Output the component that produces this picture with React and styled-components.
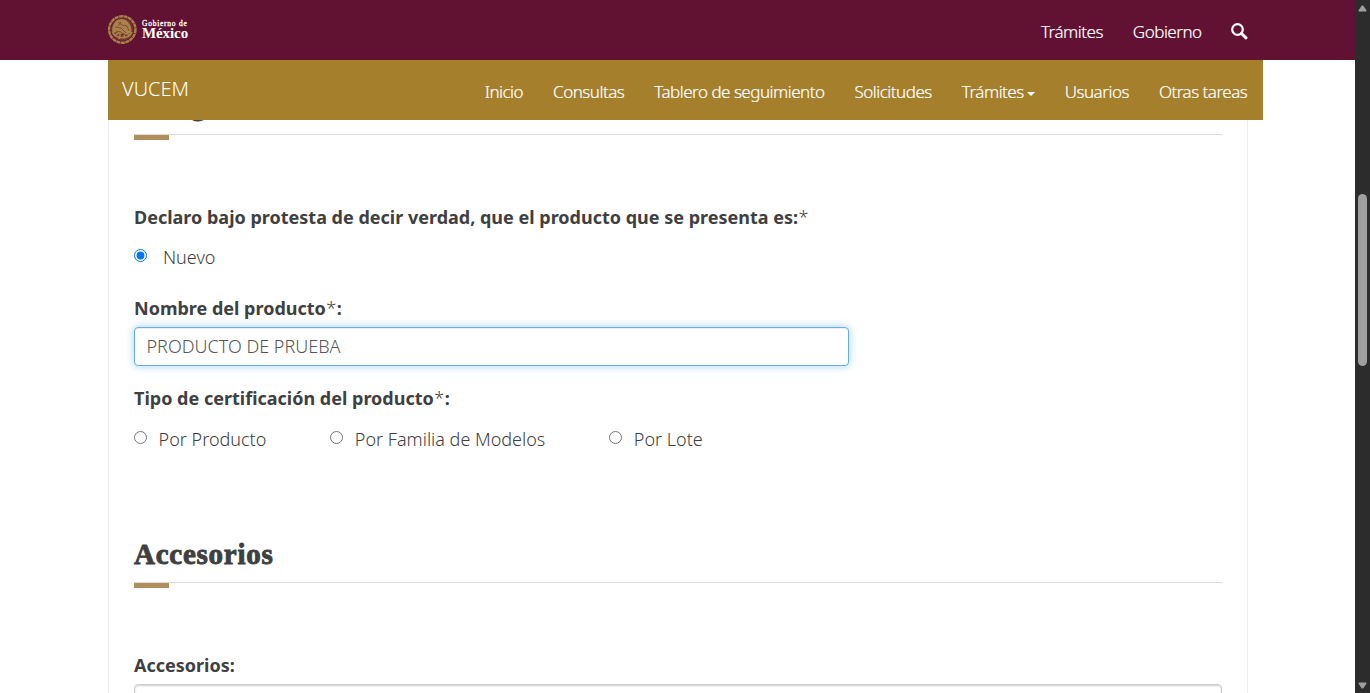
import React from "react";
import styled, { createGlobalStyle } from "styled-components";

const GlobalStyle = createGlobalStyle`
  * { box-sizing: border-box; }
  html, body { margin: 0; padding: 0; overflow: hidden; background: #fff; }
  body {
    font-family: "Noto Sans", "Open Sans", sans-serif;
    font-size: 18px;
    font-weight: 300;
    color: #404041;
  }
`;

const Window = styled.div`
  display: flex;
  width: 1370px;
  height: 693px;
  overflow: hidden;
`;

const Page = styled.div`
  flex: 1;
  display: flex;
  flex-direction: column;
  min-width: 0;
  background: #fff;
`;

const TopBar = styled.header`
  flex: none;
  display: flex;
  justify-content: space-between;
  height: 60px;
  padding: 0 107px 0 107px;
  background: #611232;
`;

const Brand = styled.a`
  display: flex;
  align-items: flex-start;
  gap: 5px;
  padding-top: 14px;
  color: #fff;
`;

const BrandText = styled.span`
  display: flex;
  flex-direction: column;
  padding-top: 6px;
  font-family: "Liberation Serif", serif;
  line-height: 1;
  white-space: nowrap;
`;

const BrandSmall = styled.span`
  font-size: 7.5px;
  font-weight: 400;
  line-height: 7px;
  letter-spacing: 0.75px;
  -webkit-text-stroke: 0.3px #fff;
`;

const BrandLarge = styled.span`
  font-size: 15px;
  font-weight: 700;
  line-height: 12px;
  letter-spacing: -0.1px;
`;

const TopLinks = styled.nav`
  display: flex;
  gap: 30px;
  padding-top: 19px;
`;

const NavLink = styled.a`
  display: flex;
  align-items: center;
  height: 24px;
  font-size: 17px;
  font-weight: 300;
  letter-spacing: -0.5px;
  -webkit-text-stroke: 0.2px #fff;
  color: #fff;
  white-space: nowrap;
`;

const SubBar = styled.div`
  flex: none;
  display: flex;
  justify-content: space-between;
  width: 1155px;
  height: 60px;
  margin-left: 108px;
  padding: 0 15.7px 0 14px;
  background: #a57f2c;
`;

const SubBrand = styled.a`
  padding-top: 15px;
  font-size: 20px;
  line-height: 28px;
  color: #fff;
`;

const SubLinks = styled.nav`
  display: flex;
  gap: 30px;
  padding-top: 19px;
`;

const Caret = styled.span`
  margin: 5px 0 0 3px;
  border: 4px solid transparent;
  border-top-color: #fff;
  border-bottom: 0;
`;

const Panel = styled.main`
  flex: 1;
  min-height: 0;
  width: 1140px;
  margin-left: 108px;
  padding: 0 25px;
  border: solid #eee;
  border-width: 0 1px;
  overflow: hidden;
`;

const SectionTitle = styled.h3`
  display: flex;
  align-items: flex-end;
  height: ${(p) => p.$height}px;
  margin: 0;
  padding: 0 0 ${(p) => p.$bottom || 0}px ${(p) => p.$indent || 0}px;
  border-bottom: 1px solid #ddd;
  font-family: "Liberation Serif", serif;
  font-size: 29px;
  line-height: 32px;
  font-weight: 700;
  letter-spacing: 0.75px;
  -webkit-text-stroke: 0.9px #404041;
`;

const TitleMark = styled.div`
  width: 35px;
  height: 5px;
  background: #b38e5d;
`;

const Field = styled.div`
  margin-top: ${(p) => p.$top}px;
`;

const Label = styled.label`
  display: block;
  height: 24px;
  line-height: 24px;
  font-weight: 700;
  white-space: nowrap;
`;

const Required = styled.span`
  padding: 0 0.5px;
  font-weight: 300;
`;

const Options = styled.div`
  display: flex;
  gap: 63.9px;
  margin-top: ${(p) => p.$top}px;
`;

const Option = styled.label`
  display: flex;
  gap: ${(p) => p.$gap}px;
  height: 24px;
  line-height: 24px;
  white-space: nowrap;
`;

const Radio = styled.input`
  flex: none;
  width: 13px;
  height: 13px;
  margin: 4px 0 0;
`;

const TextInput = styled.input`
  display: block;
  width: 715px;
  height: 39px;
  margin-top: 7px;
  padding: 0 11.5px 2px;
  border: 1px solid #66afe9;
  border-radius: 4px;
  outline: 0;
  box-shadow: inset 0 1px 1px rgba(0, 0, 0, 0.075), 0 0 8px rgba(102, 175, 233, 0.6);
  background: #fff;
  color: #555;
  font: 300 18px "Noto Sans", "Open Sans", sans-serif;
`;

const ListBox = styled.div`
  height: 60px;
  margin-top: 7px;
  border: 1px solid #ccc;
  border-radius: 4px;
  box-shadow: inset 0 1px 2px rgba(0, 0, 0, 0.2);
  background: #fff;
`;

const ScrollTrack = styled.aside`
  flex: none;
  display: flex;
  flex-direction: column;
  justify-content: space-between;
  width: 15px;
  padding: 5px 0 4px 3px;
  background: #2c2c2c;
`;

const ScrollThumb = styled.div`
  width: 9px;
  height: 172px;
  margin-bottom: 135px;
  border-radius: 5px;
  background: #9f9f9f;
`;

function Seal() {
  return (
    <svg width="30" height="31" viewBox="0 0 30 31" fill="none" stroke="#a98149">
      <circle cx="15.3" cy="15.5" r="13.2" strokeWidth="2.4" strokeDasharray="4 0.5" />
      <circle cx="15.3" cy="15.5" r="11.2" fill="#74372f" stroke="none" />
      <path d="M8 8c3-4 10-4 13 0 3 3 4 7 3 12l-3-1-2 2-3-2-3 2-3-3-4 1c-2-3 0-8 2-11z" fill="#a98149" stroke="none" />
      <path d="M11 8l4 3 5 1 2 5M8 13l6 1 5 5M9 17l5 1 3 3M14 8l-3 4" stroke="#74372f" strokeWidth="0.7" />
      <path d="M5.5 18c3 7 16 8 19.500 0M8 22l3-3M12 25l1-4M18 25l-1-4M23 22l-3-3" strokeWidth="1.8" />
    </svg>
  );
}

function SearchIcon() {
  return (
    <svg width="17" height="17" viewBox="0 0 17 17" fill="none" stroke="#fff">
      <circle cx="6.5" cy="6.5" r="5.3" strokeWidth="2.2" />
      <path d="M10.500 10.500l4.500 4.300" strokeWidth="3" strokeLinecap="round" />
    </svg>
  );
}

const SearchLink = styled.a`
  display: flex;
  margin-left: -0.6px;
  padding-top: 4px;
`;

function Arrow({ down }) {
  return (
    <svg width="9" height="7" viewBox="0 0 9 7">
      <path
        d={down ? "M1 .5h7l.6 1L5.2 6.6H3.8L.4 1.5z" : "M1 6.5h7l.6-1L5.2.4H3.8L.4 5.5z"}
        fill="#9f9f9f"
      />
    </svg>
  );
}

const menu = ["Inicio", "Consultas", "Tablero de seguimiento", "Solicitudes", "Trámites", "Usuarios", "Otras tareas"];

export default function App() {
  return (
    <Window>
      <GlobalStyle />
      <Page>
        <TopBar>
          <Brand>
            <Seal />
            <BrandText>
              <BrandSmall>Gobierno de</BrandSmall>
              <BrandLarge>México</BrandLarge>
            </BrandText>
          </Brand>
          <TopLinks>
            <NavLink>Trámites</NavLink>
            <NavLink>Gobierno</NavLink>
            <SearchLink><SearchIcon /></SearchLink>
          </TopLinks>
        </TopBar>
        <SubBar>
          <SubBrand>VUCEM</SubBrand>
          <SubLinks>
            {menu.map((item) => (
              <NavLink key={item}>
                {item}
                {item === "Trámites" && <Caret />}
              </NavLink>
            ))}
          </SubLinks>
        </SubBar>
        <Panel>
          <SectionTitle $height={15} $bottom={13} $indent={57}>g</SectionTitle>
          <TitleMark />
          <Field $top={65}>
            <Label>Declaro bajo protesta de decir verdad, que el producto que se presenta es:<Required>*</Required></Label>
            <Options $top={16}>
              <Option $gap={16}><Radio type="radio" name="estado" defaultChecked />Nuevo</Option>
            </Options>
          </Field>
          <Field $top={27}>
            <Label>Nombre del producto<Required>*</Required>:</Label>
            <TextInput defaultValue="PRODUCTO DE PRUEBA" />
          </Field>
          <Field $top={20}>
            <Label>Tipo de certificación del producto<Required>*</Required>:</Label>
            <Options $top={17}>
              <Option $gap={11.6}><Radio type="radio" name="tipo" />Por Producto</Option>
              <Option $gap={11.6}><Radio type="radio" name="tipo" />Por Familia de Modelos</Option>
              <Option $gap={11.6}><Radio type="radio" name="tipo" />Por Lote</Option>
            </Options>
          </Field>
          <SectionTitle $height={132} $bottom={12}>Accesorios</SectionTitle>
          <TitleMark />
          <Field $top={65}>
            <Label>Accesorios:</Label>
            <ListBox />
          </Field>
        </Panel>
      </Page>
      <ScrollTrack>
        <Arrow />
        <ScrollThumb />
        <Arrow down />
      </ScrollTrack>
    </Window>
  );
}
